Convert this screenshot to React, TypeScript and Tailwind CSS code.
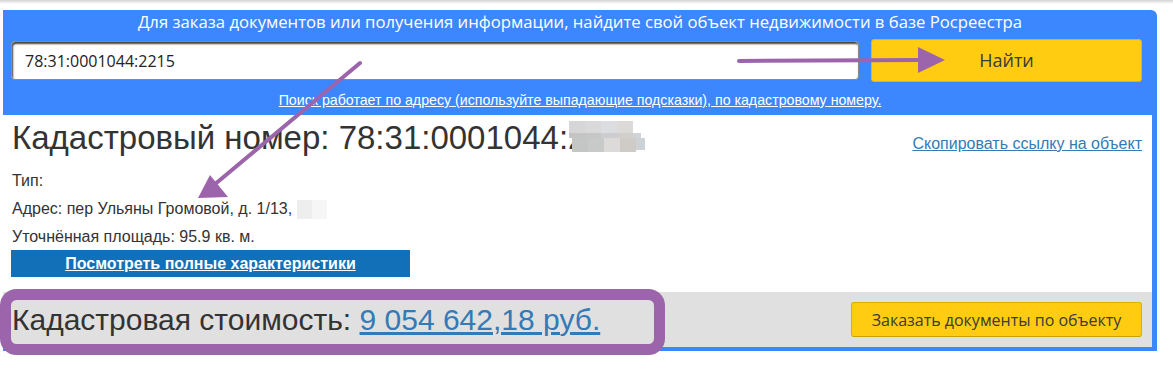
import React from "react";

const blurTop = ["#d6d6d6", "#d9d9d9", "#dcdde0", "#dcdad8"];
const blurMid = ["#c4c4c4", "#c6c6c6", "#cdcdcf", "#d0cfcc"];
const blurBot = ["#c4c5c5", "#c8c9c9", "#dcdbd9", "#cfcbc6"];

export default function App() {
  return (
    <div className="relative w-[1173px] h-[372px] overflow-hidden bg-white font-['Liberation_Sans',Arial,sans-serif]">
      <div className="h-[4px] bg-gradient-to-b from-[#d4d4d4] to-white" />
      <div className="ml-[3px] mt-[6px] w-[1154px]">
        {/* Header */}
        <div className="h-[105px] bg-[#3c87fe] rounded-tr-[6px] flex flex-col font-['Open_Sans',sans-serif]">
          <div className="pt-[0px] text-center text-white text-[16.7px] leading-[24px]">
            Для заказа документов или получения информации, найдите свой объект недвижимости в базе Росреестра
          </div>
          <div className="mt-[5px] ml-[8px] flex items-center gap-[12px]">
            <div className="w-[848px] h-[39px] bg-white rounded-[4px] border border-[#8a8a8a] shadow-[inset_1px_2px_2px_rgba(0,0,0,0.75)] flex items-center pl-[13px] text-[16px] text-[#222]">
              78:31:0001044:2215
            </div>
            <button className="w-[271px] h-[43px] bg-[#ffcc11] rounded-[3px] border border-[#e6b400] text-[18px] text-[#3a3a3a] font-['Open_Sans',sans-serif]">
              Найти
            </button>
          </div>
          <div className="mt-[5px] text-center">
            <span className="text-white text-[14.2px] leading-[16px] underline font-['Liberation_Sans',Arial,sans-serif]">
              Поиск работает по адресу (используйте выпадающие подсказки), по кадастровому номеру.
            </span>
          </div>
        </div>

        {/* Content */}
        <div className="bg-white border-r-[5px] border-b-[4px] border-[#3c87fe]">
          <div className="pl-[9px] pr-[10px] pt-[5px] flex items-start justify-between">
            <div className="text-[33px] leading-[36px] text-[#333]">
              Кадастровый номер: 78:31:0001044:
              <span className="relative inline-block">
                2215
                <span className="absolute left-[1px] top-[1px] w-[76px] h-[32px] flex flex-col">
                  <span className="flex h-[12px]">
                    {blurTop.map((c, i) => (
                      <span key={i} className="w-[16px] h-full" style={{ background: c }} />
                    ))}
                    <span className="w-[12px] h-full bg-white" />
                  </span>
                  <span className="flex h-[5px]">
                    {blurMid.map((c, i) => (
                      <span key={i} className="w-[16px] h-full" style={{ background: c }} />
                    ))}
                    <span className="w-[8px] h-full bg-[#d0d4d8]" />
                  </span>
                  <span className="flex h-[14px] pl-[3px]">
                    {blurBot.map((c, i) => (
                      <span key={i} className="w-[16px] h-full" style={{ background: c }} />
                    ))}
                    <span className="w-[9px] h-[12px] bg-[#cdd2d6]" />
                  </span>
                </span>
              </span>
            </div>
            <a className="mt-[15px] text-[16px] leading-[18px] text-[#337ab7] underline">
              Скопировать ссылку на объект
            </a>
          </div>

          <div className="pl-[9px] mt-[11px] text-[16px] text-[#333]">
            <div className="h-[28px] leading-[28px]">Тип:</div>
            <div className="h-[28px] leading-[28px] flex items-center">
              Адрес: пер Ульяны Громовой, д. 1/13,
              <span className="ml-[5px] w-[30px] h-[19px] flex">
                <span className="w-[15px] h-full bg-[#eeeeee]" />
                <span className="w-[15px] h-full bg-[#f6f6f6]" />
              </span>
            </div>
            <div className="h-[27px] leading-[27px]">Уточнённая площадь: 95.9 кв. м.</div>
          </div>
          <div className="ml-[8px] w-[399px] h-[27px] bg-[#1170b7] flex items-center justify-center">
            <a className="text-white text-[16px] font-bold underline">Посмотреть полные характеристики</a>
          </div>

          <div className="mt-[15px] h-[55px] bg-[#e0e0e0] flex items-center justify-between pl-[9px] pr-[10px]">
            <div className="text-[30px] leading-[34px] text-[#333]">
              Кадастровая стоимость: <a className="text-[#337ab7] underline">9 054 642,18 руб.</a>
            </div>
            <button className="w-[291px] h-[35px] bg-[#ffcc11] rounded-[3px] border border-[#e0b000] border-b-[#c9a000] text-[16px] text-[#3a3a3a] font-['Open_Sans',sans-serif]">
              Заказать документы по объекту
            </button>
          </div>
        </div>
      </div>

      {/* Annotations */}
      <svg className="absolute inset-0 pointer-events-none" width="1173" height="372" viewBox="0 0 1173 372">
        <line x1="360" y1="63" x2="214" y2="185" stroke="#9c65ab" strokeWidth="4" strokeLinecap="round" />
        <polygon points="198,198 210,175 228,197" fill="#9c65ab" />
        <line x1="739" y1="61" x2="922" y2="60" stroke="#9c65ab" strokeWidth="4" strokeLinecap="round" />
        <polygon points="945,60 918,47 918,73" fill="#9c65ab" />
        <rect x="5.5" y="294.5" width="654" height="55" rx="11" fill="none" stroke="#9c65ab" strokeWidth="11" />
      </svg>
    </div>
  );
}
